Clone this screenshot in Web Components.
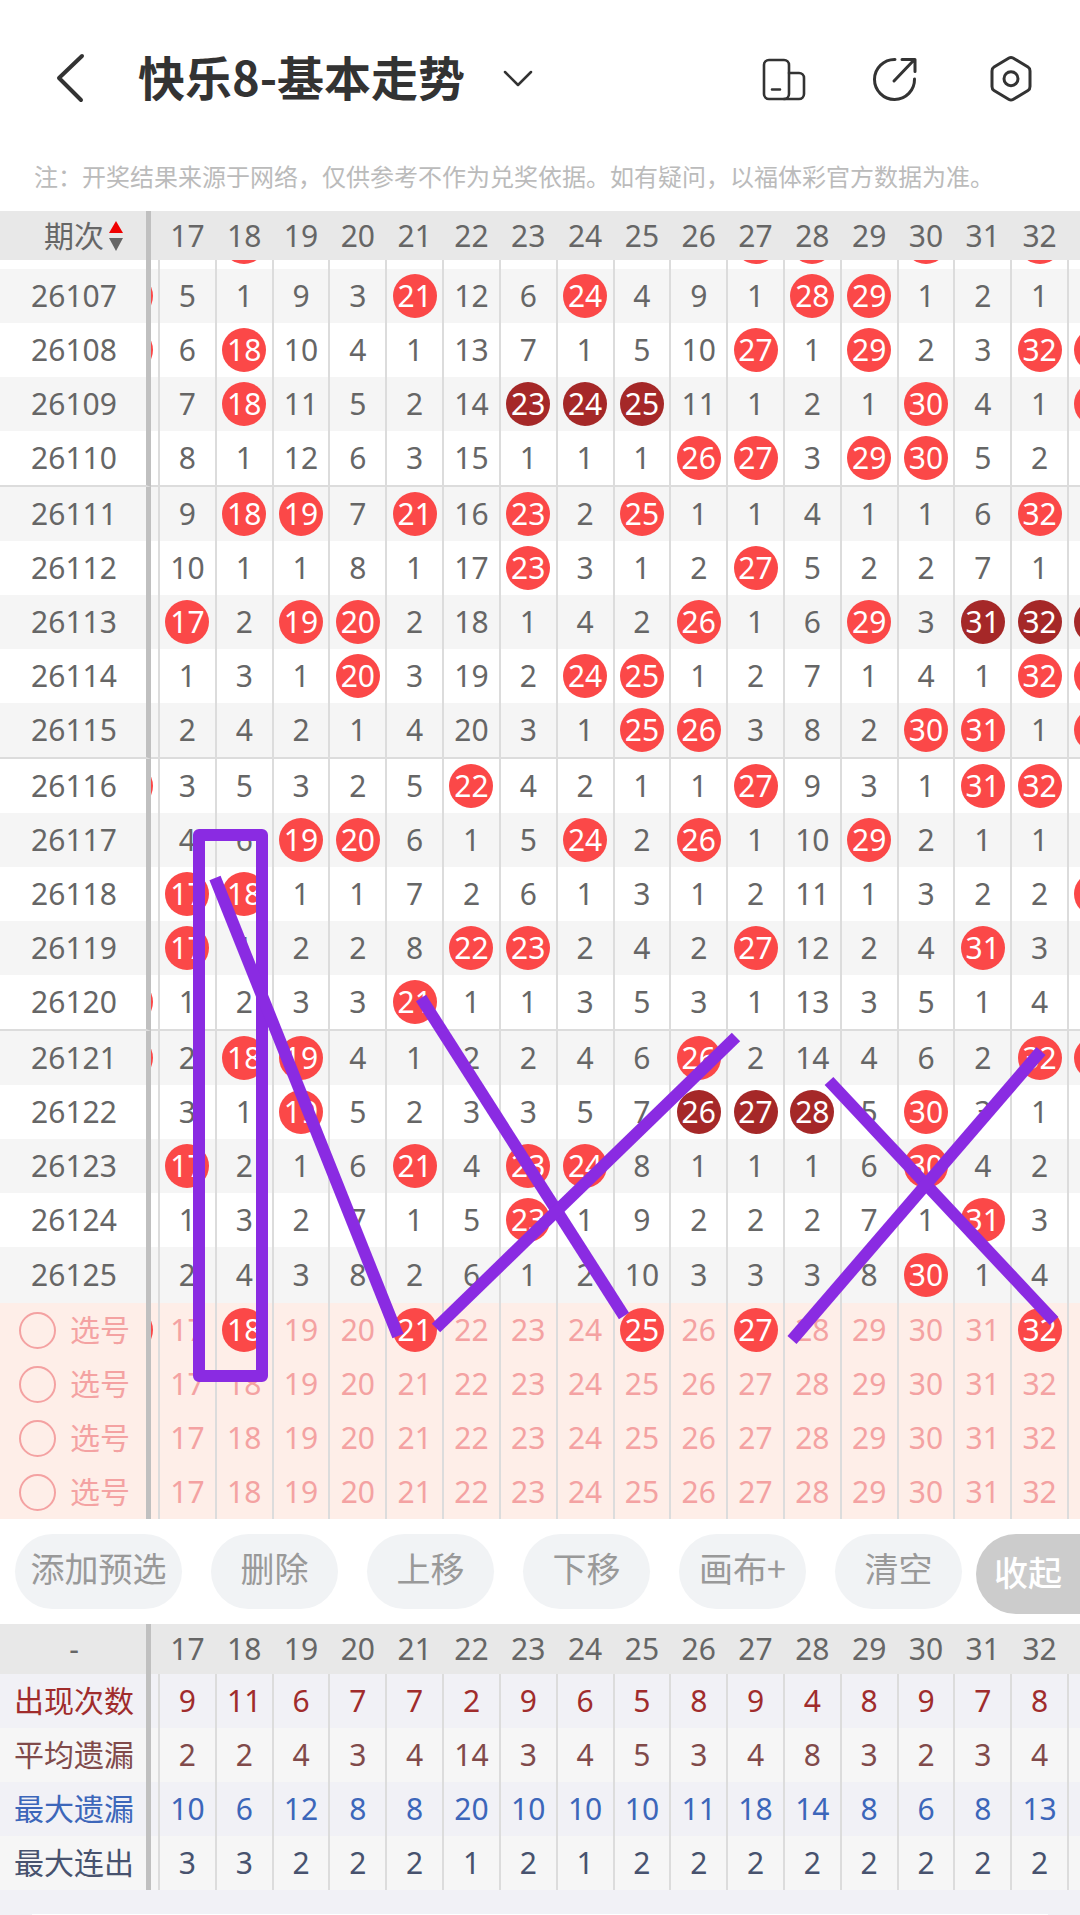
<!DOCTYPE html>
<html lang="zh-CN">
<head>
<meta charset="utf-8">
<meta name="viewport" content="width=device-width, initial-scale=1">
<title>快乐8-基本走势</title>
<style>
    body {
        margin: 0;
        min-height: 100vh;
        display: flex;
        flex-direction: column;
        overflow-x: hidden;
        background: #fff;
        color: #666;
        font: 30px/40px "Noto Sans", "Noto Sans CJK SC", sans-serif;
    }
</style>
</head>
<body>
<app-bar>
    快乐8-基本走势
    <span slot="note">注：开奖结果来源于网络，仅供参考不作为兑奖依据。如有疑问，以福体彩官方数据为准。</span>
</app-bar>
<draw-board>
    <trend-table></trend-table>
</draw-board>
<tool-bar>
    <tool-button wide>添加预选</tool-button>
    <tool-button>删除</tool-button>
    <tool-button>上移</tool-button>
    <tool-button>下移</tool-button>
    <tool-button>画布+</tool-button>
    <tool-button>清空</tool-button>
    <tool-button slot="end" fold>收起</tool-button>
</tool-bar>
<stat-table></stat-table>
<bottom-sheet></bottom-sheet>

<script>
const FIRST = 17;
const LAST = 32;

// r = drawn number, d = three or more in a row.
// The last field marks balls of the neighbour columns that stick out (L/R, D = dark right).
const DRAWS = [
    ["26107", "5 1 9 3 21r 12 6 24r 4 9 1 28r 29r 1 2 1", "L"],
    ["26108", "6 18r 10 4 1 13 7 1 5 10 27r 1 29r 2 3 32r", "LR"],
    ["26109", "7 18r 11 5 2 14 23d 24d 25d 11 1 2 1 30r 4 1", "R"],
    ["26110", "8 1 12 6 3 15 1 1 1 26r 27r 3 29r 30r 5 2", ""],
    ["26111", "9 18r 19r 7 21r 16 23r 2 25r 1 1 4 1 1 6 32r", ""],
    ["26112", "10 1 1 8 1 17 23r 3 1 2 27r 5 2 2 7 1", ""],
    ["26113", "17r 2 19r 20r 2 18 1 4 2 26r 1 6 29r 3 31d 32d", "D"],
    ["26114", "1 3 1 20r 3 19 2 24r 25r 1 2 7 1 4 1 32r", "R"],
    ["26115", "2 4 2 1 4 20 3 1 25r 26r 3 8 2 30r 31r 1", "R"],
    ["26116", "3 5 3 2 5 22r 4 2 1 1 27r 9 3 1 31r 32r", "L"],
    ["26117", "4 6 19r 20r 6 1 5 24r 2 26r 1 10 29r 2 1 1", ""],
    ["26118", "17r 18r 1 1 7 2 6 1 3 1 2 11 1 3 2 2", "R"],
    ["26119", "17r 1 2 2 8 22r 23r 2 4 2 27r 12 2 4 31r 3", ""],
    ["26120", "1 2 3 3 21r 1 1 3 5 3 1 13 3 5 1 4", "L"],
    ["26121", "2 18r 19r 4 1 2 2 4 6 26r 2 14 4 6 2 32r", "LR"],
    ["26122", "3 1 19r 5 2 3 3 5 7 26d 27d 28d 5 30r 3 1", ""],
    ["26123", "17r 2 1 6 21r 4 23r 24r 8 1 1 1 6 30r 4 2", ""],
    ["26124", "1 3 2 7 1 5 23r 1 9 2 2 2 7 1 31r 3", ""],
    ["26125", "2 4 3 8 2 6 1 2 10 3 3 3 8 30r 1 4", ""]
];
const PREVIOUS = [18, 27, 28, 30, 32];
const PICKS = [[18, 21, 25, 27, 32], [], [], []];
const STATS = [
    ["出现次数", "9 11 6 7 7 2 9 6 5 8 9 4 8 9 7 8"],
    ["平均遗漏", "2 2 4 3 4 14 3 4 5 3 4 8 3 2 3 4"],
    ["最大遗漏", "10 6 12 8 8 20 10 10 10 11 18 14 8 6 8 13"],
    ["最大连出", "3 3 2 2 2 1 2 1 2 2 2 2 2 2 2 2"]
];

const numbers = [];
for (let n = FIRST; n <= LAST; n++) numbers.push(n);

// shared by both tables
const TABLE_STYLE = `
    :host { display: block; }
    table {
        width: 100%;
        table-layout: fixed;
        border-collapse: separate;
        border-spacing: 0;
    }
    col.name { width: 151px; }
    col.left { width: 9px; }
    col.right { width: 11px; }
    th, td {
        box-sizing: border-box;
        height: 54px;
        padding: 0;
        text-align: center;
        vertical-align: middle;
        font-weight: 400;
        line-height: 40px;
    }
    td { border-right: 2px solid #dcdcdc; }
    td:last-child { border-right: 0; }
    thead th { height: 49px; border-right: 2px solid #e8e8e8; background: #e8e8e8; }
    th:first-child { padding-left: 2px; border-right: 5px solid #c0c0c0; }
`;

const COLS = `<colgroup><col class="name"><col class="left">${"<col>".repeat(numbers.length)}<col class="right"></colgroup>`;

function headRow(first) {
    return `<thead><tr><th scope="col">${first}</th><th></th>${numbers.map(n => `<th scope="col">${n}</th>`).join("")}<th></th></tr></thead>`;
}

class AppBar extends HTMLElement {
    constructor() {
        super();
        this.attachShadow({ mode: "open" }).innerHTML = `
        <style>
        :host { display: block; }
        header {
            display: flex;
            align-items: center;
            height: 156px;
            padding: 0 39px 0 50px;
        }
        h1 {
            margin: 0 28px 0 48px;
            padding-bottom: 4px;
            font: 700 47px/60px "Noto Sans CJK SC", sans-serif;
            color: #333;
        }
        nav { display: flex; gap: 60px; margin-left: auto; }
        button {
            display: block;
            padding: 0;
            border: 0;
            background: none;
            color: #333;
            cursor: pointer;
        }
        svg {
            display: block;
            fill: none;
            stroke: currentColor;
            stroke-width: 3;
            stroke-linecap: round;
            stroke-linejoin: round;
        }
        p {
            margin: 0;
            padding: 0 34px 15px;
            font: 24px/40px "Noto Sans CJK SC", sans-serif;
            color: #bbb;
        }
        </style>
        <header>
            <button aria-label="返回"><svg width="40" height="54" viewBox="0 0 40 54"><path stroke-width="4" d="M32 5 9 27 31 49"/></svg></button>
            <h1><slot></slot></h1>
            <button aria-label="切换走势"><svg width="48" height="48" viewBox="0 0 48 48"><path stroke-width="2.5" d="M12 18 25 31 38 18"/></svg></button>
            <nav>
                <button aria-label="横竖屏"><svg width="46" height="56" viewBox="0 0 46 56"><rect stroke-width="2.6" x="3" y="10" width="25" height="39" rx="5"/><path stroke-width="2.6" d="M28 23h10a5 5 0 0 1 5 5v16a5 5 0 0 1-5 5H23M11 39.500h8"/></svg></button>
                <button aria-label="分享"><svg width="54" height="56" viewBox="0 0 54 56"><path d="M28 9.500A20 20 0 1 0 47.500 29M35 9.500h13v12M27 31 47 10"/></svg></button>
                <button aria-label="设置"><svg width="60" height="56" viewBox="0 0 60 56"><path d="M28 8q2-1.200 4 0l15 9q2 1.200 2 4v15.500q0 2.800-2 4l-15 9q-2 1.200-4 0l-15-9q-2-1.200-2-4V21q0-2.800 2-4z"/><circle cx="30" cy="28.700" r="7"/></svg></button>
            </nav>
        </header>
        <p><slot name="note"></slot></p>`;
    }
}

class TrendTable extends HTMLElement {
    constructor() {
        super();
        this.attachShadow({ mode: "open" }).innerHTML = `
        <style>
        ${TABLE_STYLE}
        .sort {
            display: flex;
            align-items: center;
            justify-content: flex-end;
            gap: 5px;
            width: 100%;
            padding: 0 23px 0 0;
            border: 0;
            background: none;
            font: inherit;
            color: inherit;
        }
        tbody tr:nth-child(even) > * { background: #f5f5f5; }
        tr.line > * { height: 56px; border-bottom: 2px solid #dcdcdc; }
        tr.last > * { height: 56px; }
        .ball {
            display: block;
            width: 44px;
            height: 44px;
            margin: 0 auto;
            padding: 0;
            border: 0;
            border-radius: 50%;
            background: #fb4848;
            color: #fff;
            font: inherit;
            line-height: 44px;
        }
        .ball.d { background: #a52828; }
        .clip { overflow: hidden; }
        .left .ball { margin-left: -42px; }
        .right .ball { margin-left: 5px; }

        /* what is left of the row that scrolls under the head */
        tr.tail > * { height: 9px; }
        tr.tail .clip { height: 9px; }
        tr.tail .ball { margin-top: -40px; }

        tbody.picks tr > * { background: #feeee8; color: #f4a2a2; }
        .picks .ball.off { background: none; color: inherit; }
        .picks label {
            display: flex;
            align-items: center;
            gap: 14px;
            padding-left: 17px;
        }
        .picks input {
            appearance: none;
            box-sizing: border-box;
            width: 37px;
            height: 37px;
            margin: 0;
            border: 2px solid #f4a2a2;
            border-radius: 50%;
        }
        .picks input:checked { background: #f4a2a2; }
        </style>
        <table>
            ${COLS}
            ${headRow(`<button class="sort">期次<svg width="14" height="30" viewBox="0 0 14 30"><path fill="#f00000" d="M7 0l7 12H0z"/><path fill="#666" d="M0 17h14L7 30z"/></svg></button>`)}
            <tbody>${this.tail()}${DRAWS.map((d, i) => this.drawRow(d, i)).join("")}</tbody>
            <tbody class="picks">${PICKS.map((p, i) => this.pickRow(p, i)).join("")}</tbody>
        </table>`;

        this.shadowRoot.querySelector(".picks").addEventListener("click", eve => {
            const ball = eve.target.closest("button");
            if (ball) ball.classList.toggle("off");
        });
    }

    edge(side, cls) {
        const ball = cls === null ? "" : `<span class="ball ${cls}"></span>`;
        return `<td><div class="clip ${side}">${ball}</div></td>`;
    }

    tail() {
        const cells = numbers.map(n => `<td><div class="clip">${PREVIOUS.includes(n) ? '<span class="ball"></span>' : ""}</div></td>`);
        return `<tr class="tail"><th></th><td></td>${cells.join("")}<td></td></tr>`;
    }

    drawRow([issue, values, edges], i) {
        const cells = values.split(" ").map(v => {
            const mark = v.slice(-1);
            if (mark === "r" || mark === "d") return `<td><span class="ball ${mark}">${v.slice(0, -1)}</span></td>`;
            return `<td>${v}</td>`;
        });
        // a rule after every fifth issue
        let cls = Number(issue) % 5 === 0 ? "line" : "";
        if (i === DRAWS.length - 1) cls = "last";
        const left = edges.includes("L") ? "" : null;
        const right = edges.includes("R") ? "" : edges.includes("D") ? "d" : null;
        return `<tr class="${cls}"><th scope="row">${issue}</th>${this.edge("left", left)}${cells.join("")}${this.edge("right", right)}</tr>`;
    }

    pickRow(picked, i) {
        const cells = numbers.map(n => `<td><button class="ball ${picked.includes(n) ? "" : "off"}">${n}</button></td>`);
        return `<tr><th scope="row"><label><input type="radio" name="pick" value="${i}">选号</label></th>${this.edge("left", i === 0 ? "" : null)}${cells.join("")}${this.edge("right", null)}</tr>`;
    }
}

class StatTable extends HTMLElement {
    constructor() {
        super();
        const rows = STATS.map(([name, values]) => `<tr><th scope="row">${name}</th><td></td>${values.split(" ").map(v => `<td>${v}</td>`).join("")}<td></td></tr>`);
        this.attachShadow({ mode: "open" }).innerHTML = `
        <style>
        ${TABLE_STYLE}
        thead th { height: 50px; }
        tbody tr { background: #f6f6f6; }
        tbody tr:nth-child(odd) { background: #f1f1f6; }
        tbody tr:nth-child(1) { color: #a02c2c; }
        tbody tr:nth-child(2) { color: #804a4a; }
        tbody tr:nth-child(3) { color: #3c66ba; }
        tbody tr:nth-child(4) { color: #47526e; }
        </style>
        <table>${COLS}${headRow("-")}<tbody>${rows.join("")}</tbody></table>`;
    }
}

// canvas for freehand marks above the slotted chart
class DrawBoard extends HTMLElement {
    constructor() {
        super();
        this.attachShadow({ mode: "open" }).innerHTML = `
        <style>
        :host { display: block; position: relative; }
        svg {
            position: absolute;
            inset: 0;
            width: 100%;
            height: 100%;
            pointer-events: none;
            fill: none;
            stroke: #8a2be2;
            stroke-width: 12;
            stroke-linejoin: round;
        }
        </style>
        <slot></slot>
        <svg viewBox="0 0 1080 1308" preserveAspectRatio="none">
            <rect x="199" y="624" width="63" height="541"/>
            <path d="M215 667 398 1125"/>
            <path d="M421 787 624 1105"/>
            <path d="M436 1117 736 826"/>
            <path d="M829 870 1054 1110"/>
            <path d="M792 1129 1041 840"/>
        </svg>`;
    }
}

class ToolBar extends HTMLElement {
    constructor() {
        super();
        this.attachShadow({ mode: "open" }).innerHTML = `
        <style>
        :host { display: flex; align-items: flex-start; padding: 15px 0 10px; }
        div { flex: 1; display: flex; gap: 29px; padding: 0 14px 0 15px; }
        </style>
        <div><slot></slot></div>
        <slot name="end"></slot>`;
    }
}

class ToolButton extends HTMLElement {
    constructor() {
        super();
        this.attachShadow({ mode: "open" }).innerHTML = `
        <style>
        :host { display: block; flex: 1 0 127px; }
        :host([wide]) { flex-basis: 167px; }
        :host([fold]) { flex: 0 0 104px; }
        button {
            display: block;
            width: 100%;
            height: 75px;
            padding: 0 0 8px;
            border: 0;
            border-radius: 38px;
            background: #f1f3f5;
            color: #999;
            font: 34px/40px "Noto Sans CJK SC", sans-serif;
            white-space: nowrap;
            cursor: pointer;
        }
        :host([fold]) button {
            height: 80px;
            padding-bottom: 4px;
            border-radius: 40px 0 0 40px;
            background: #ccc;
            color: #fff;
            font-weight: 500;
        }
        </style>
        <button><slot></slot></button>`;
    }
}

class BottomSheet extends HTMLElement {
    constructor() {
        super();
        this.attachShadow({ mode: "open" }).innerHTML = `
        <style>
        :host {
            flex: 1;
            display: block;
            padding: 24px 32px 0;
            background: #f1f1f6;
        }
        div { height: 1px; background: #fff; }
        </style>
        <div></div>`;
    }
}

customElements.define("app-bar", AppBar);
customElements.define("trend-table", TrendTable);
customElements.define("stat-table", StatTable);
customElements.define("draw-board", DrawBoard);
customElements.define("tool-button", ToolButton);
customElements.define("tool-bar", ToolBar);
customElements.define("bottom-sheet", BottomSheet);
</script>
</body>
</html>
